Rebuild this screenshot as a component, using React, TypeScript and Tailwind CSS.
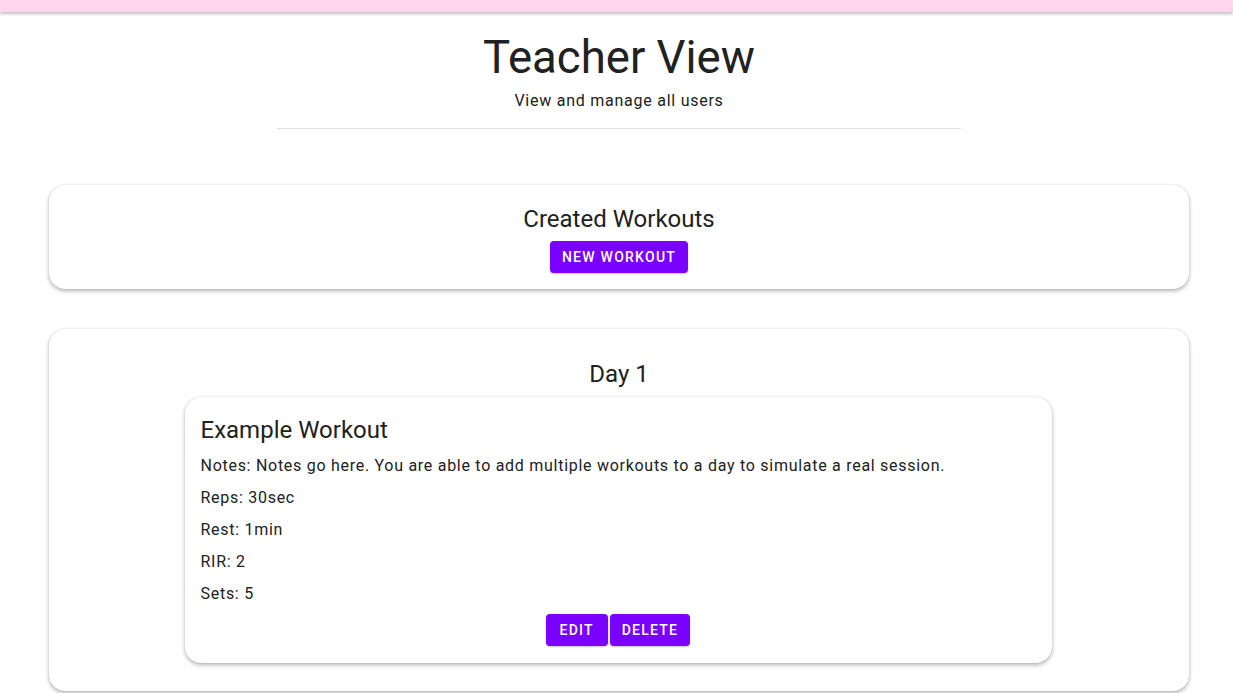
import React from "react";

const font = { fontFamily: "Roboto, 'Noto Sans', sans-serif" };

function Btn({ children, className = "" }: { children: React.ReactNode; className?: string }) {
  return (
    <button className={"h-[32px] px-[12px] rounded-[4px] bg-[#7a00ff] text-white text-[14px] font-medium tracking-[1.25px] uppercase leading-none shadow-[0_1px_2px_rgba(0,0,0,0.25)] " + className}>
      {children}
    </button>
  );
}

export default function App() {
  const lines = [
    "Notes: Notes go here. You are able to add multiple workouts to a day to simulate a real session.",
    "Reps: 30sec",
    "Rest: 1min",
    "RIR: 2",
    "Sets: 5",
  ];
  return (
    <div className="min-h-screen bg-white text-[#212121]" style={font}>
      <div className="h-[12px] bg-[#ffd6ee] shadow-[0_2px_3px_rgba(0,0,0,0.25)]" />
      <div className="flex flex-col items-center pl-[5px]">
        <h1 className="mt-[19px] text-[45.5px] leading-[54px] font-normal">Teacher View</h1>
        <p className="mt-[4px] text-[16px] leading-[24px] tracking-[0.75px]">View and manage all users</p>
        <div className="mt-[15px] w-[684px] h-px bg-[#e0e0e0]" />
      </div>
      <div className="ml-[49px] w-[1140px] mt-[56px] flex flex-col gap-[40px]">
        <div className="rounded-[16px] bg-white shadow-[0_2px_4px_rgba(0,0,0,0.3),0_0_1px_rgba(0,0,0,0.2)] flex flex-col items-center pt-[18px] pb-[16px]">
          <h2 className="text-[24px] leading-[32px] font-normal">Created Workouts</h2>
          <div className="mt-[6px]">
            <Btn>New Workout</Btn>
          </div>
        </div>
        <div className="rounded-[16px] bg-white shadow-[0_2px_4px_rgba(0,0,0,0.3),0_0_1px_rgba(0,0,0,0.2)] flex flex-col items-center pt-[29px] pb-[28px]">
          <h2 className="text-[24px] leading-[32px] font-normal">Day 1</h2>
          <div className="mt-[7px] mr-[2px] w-[867px] rounded-[16px] bg-white shadow-[0_2px_4px_rgba(0,0,0,0.3),0_0_1px_rgba(0,0,0,0.2)] px-[16px] pt-[17px] pb-[17px]">
            <h3 className="text-[24px] leading-[32px] font-normal">Example Workout</h3>
            <div className="mt-[4px] flex flex-col">
              {lines.map((l) => (
                <p key={l} className="text-[16px] leading-[32px] tracking-[0.72px]">{l}</p>
              ))}
            </div>
            <div className="mt-[4px] flex justify-center gap-[2px]">
              <Btn className="min-w-[62px]">Edit</Btn>
              <Btn>Delete</Btn>
            </div>
          </div>
        </div>
      </div>
    </div>
  );
}
